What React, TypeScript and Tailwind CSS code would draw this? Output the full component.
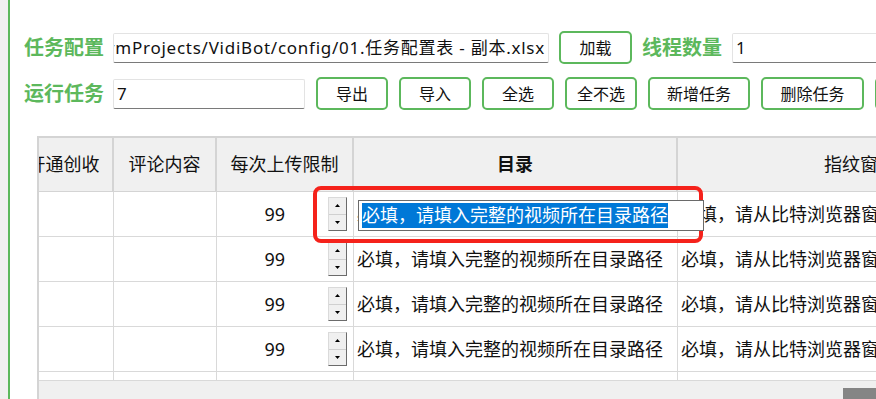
import React from "react";

const GREEN = "border-[#5cb85c]";

function Btn({ w, children }: { w: string; children: React.ReactNode }) {
  return (
    <div
      className={`${w} h-[33px] shrink-0 border-2 ${GREEN} rounded-[5px] bg-white flex items-center justify-center text-[16px] text-[#111]`}
    >
      {children}
    </div>
  );
}

function Label({ children }: { children: React.ReactNode }) {
  return (
    <div className="w-[80px] shrink-0 text-[20px] font-bold text-[#5cb85c] leading-none whitespace-nowrap">
      {children}
    </div>
  );
}

function Spin() {
  return (
    <div className="w-[19px] h-[34px] shrink-0 bg-[#f0f0f0] border border-[#dadada] border-r-[#6b6b6b] border-b-[#6b6b6b] flex flex-col">
      <div className="flex-1 flex items-center justify-center border-b border-[#d0d0d0]">
        <svg width="5" height="3" viewBox="0 0 5 3">
          <polygon points="2.5,0 5,3 0,3" fill="#000" />
        </svg>
      </div>
      <div className="flex-1 flex items-center justify-center">
        <svg width="5" height="3" viewBox="0 0 5 3">
          <polygon points="0,0 5,0 2.5,3" fill="#000" />
        </svg>
      </div>
    </div>
  );
}

const colW = ["w-[99px]", "w-[103px]", "w-[137px]", "w-[324px]", "w-[322px]"];

function Row({ editing, partial }: { editing?: boolean; partial?: boolean }) {
  return (
    <div className={`flex ${partial ? "h-[9px]" : "h-[45px]"} shrink-0 border-b border-[#d9d9d9] bg-white text-[18px] text-[#111]`}>
      <div className={`${colW[0]} shrink-0 border-r border-[#d9d9d9]`} />
      <div className={`${colW[1]} shrink-0 border-r border-[#d9d9d9]`} />
      <div className={`${colW[2]} shrink-0 border-r border-[#d9d9d9] flex items-center justify-end pr-[6px]`}>
        {!partial && <span className="mr-[43px]">99</span>}
        <div className={partial ? "self-start mt-[10px]" : ""}>
          <Spin />
        </div>
      </div>
      <div className={`${colW[3]} shrink-0 border-r border-[#d9d9d9] flex items-center pl-[3px] relative whitespace-nowrap`}>
        {!partial && <span>必填，请填入完整的视频所在目录路径</span>}
        {editing && (
          <div className="absolute left-[4px] top-[8px] w-[346px] h-[31px] z-10 bg-white border border-[#6a6a6a] flex items-center pl-[3px]">
            <span className="bg-[#0078d7] text-white leading-[25px] h-[25px]">
              必填，请填入完整的视频所在目录路径
            </span>
          </div>
        )}
      </div>
      <div className={`${colW[4]} shrink-0 flex items-center pl-[3px] whitespace-nowrap`}>
        {!partial && <span>必填，请从比特浏览器窗口复制指纹窗口ID</span>}
      </div>
    </div>
  );
}

export default function App() {
  return (
    <div
      className="relative flex h-[399px] w-[876px] overflow-hidden bg-white"
      style={{ fontFamily: '"Noto Sans", "Noto Sans CJK SC", sans-serif' }}
    >
      <div className="w-[8px] shrink-0 bg-[#f0f0f0]" />
      <div className="w-[2px] shrink-0 bg-[#5cb85c]" />
      <div className="flex-1 min-w-0 flex flex-col pt-[31px] pl-[14px]">
        {/* row 1 */}
        <div className="flex items-center h-[33px]">
          <Label>任务配置</Label>
          <div className="ml-[9px] w-[436px] h-[30px] shrink-0 bg-white border border-[#e3e3e3] border-b-[#7a7a7a] rounded-[2px] overflow-hidden flex items-center justify-end pr-[3px]">
            <span className="whitespace-nowrap text-[17px] tracking-[0.75px] text-[#111]">
              D:/PycharmProjects/VidiBot/config/01.任务配置表 - 副本.xlsx
            </span>
          </div>
          <div className="ml-[10px]">
            <Btn w="w-[73px]">加载</Btn>
          </div>
          <div className="ml-[10px]">
            <Label>线程数量</Label>
          </div>
          <div className="ml-[10px] w-[200px] h-[30px] shrink-0 bg-white border border-[#e3e3e3] border-b-[#7a7a7a] rounded-[2px] flex items-center pl-[3px] text-[17px] text-[#111]">
            1
          </div>
        </div>
        {/* row 2 */}
        <div className="flex items-center h-[33px] mt-[13px]">
          <Label>运行任务</Label>
          <div className="ml-[9px] w-[192px] h-[30px] shrink-0 bg-white border border-[#e3e3e3] border-b-[#7a7a7a] rounded-[2px] flex items-center pl-[3px] text-[17px] text-[#111]">
            7
          </div>
          <div className="ml-[11px] flex gap-[11px]">
            <Btn w="w-[72px]">导出</Btn>
            <Btn w="w-[72px]">导入</Btn>
            <Btn w="w-[72px]">全选</Btn>
            <Btn w="w-[72px]">全不选</Btn>
            <Btn w="w-[102px]">新增任务</Btn>
            <Btn w="w-[103px]">删除任务</Btn>
            <Btn w="w-[90px]">开始</Btn>
          </div>
        </div>
        {/* table */}
        <div className="mt-[26px] ml-[13px] flex-1 min-h-0 flex flex-col border-t-2 border-l-2 border-[#d4d4d4] overflow-hidden">
          <div className="h-[243px] shrink-0 overflow-hidden">
            <div className="ml-[-24px] flex flex-col w-[1000px]">
              {/* header */}
              <div className="flex h-[54px] shrink-0 bg-[#f0f0f0] border-b border-[#d4d4d4] text-[18px] text-[#111] whitespace-nowrap">
                <div className={`${colW[0]} shrink-0 border-r-2 border-[#d4d4d4] flex items-center justify-center`}>开通创收</div>
                <div className={`${colW[1]} shrink-0 border-r-2 border-[#d4d4d4] flex items-center justify-center`}>评论内容</div>
                <div className={`${colW[2]} shrink-0 border-r-2 border-[#d4d4d4] flex items-center justify-center`}>每次上传限制</div>
                <div className={`${colW[3]} shrink-0 border-r-2 border-[#d4d4d4] flex items-center justify-center font-bold`}>目录</div>
                <div className={`${colW[4]} shrink-0 flex items-center pl-[146px]`}>指纹窗口ID</div>
              </div>
              <Row editing />
              <Row />
              <Row />
              <Row />
              <Row partial />
            </div>
          </div>
          <div className="flex-1 bg-[#f0f0f0] flex items-start">
            <div className="ml-[804px] mt-[7px] w-[60px] h-[11px] bg-[#858585] shrink-0" />
          </div>
        </div>
      </div>
      {/* red annotation */}
      <div className="absolute left-[313px] top-[186px] w-[390px] h-[57px] border-4 border-[#f5221b] rounded-[8px] pointer-events-none" />
    </div>
  );
}
